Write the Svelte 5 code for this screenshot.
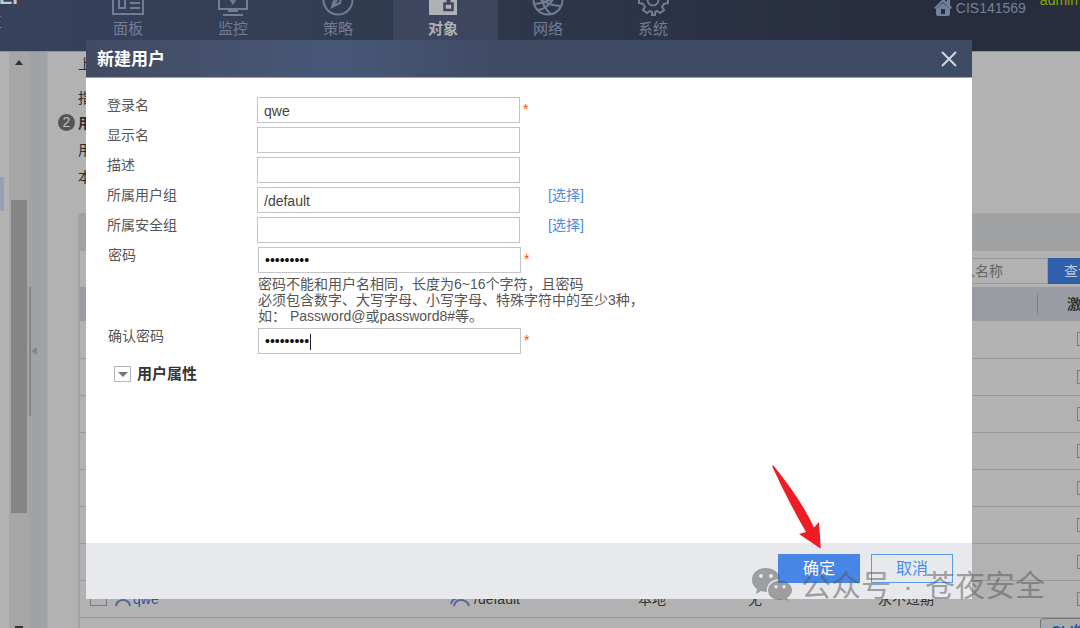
<script>
  const tabs = [
    { name: '面板', icon: 'panel' },
    { name: '监控', icon: 'monitor' },
    { name: '策略', icon: 'policy' },
    { name: '对象', icon: 'object', active: true },
    { name: '网络', icon: 'network' },
    { name: '系统', icon: 'system' }
  ];
  const emptyRows = [1, 2, 3, 4, 5, 6, 7];
  let form = $state({ login: 'qwe', display: '', desc: '', group: '/default', security: '', pwd: 'Abcdef12#', confirm: 'Abcdef12#' });
</script>

<div class="app">
  <header class="top">
    <div class="brand"><b>EF</b><span>正</span></div>
    <nav>
      {#each tabs as t}
        <a href="#{t.icon}" class:active={t.active}>
          <svg width="34" height="16" viewBox="0 0 34 16" fill="none" stroke="currentColor" stroke-width="2">
            {#if t.icon === 'panel'}
              <path d="M2-8V14H32V-8M8-4V8H14V-4M19 3H29M19 8H29" />
            {:else if t.icon === 'monitor'}
              <path d="M3-8V9H31V-8M17 9V12M12 11H22M7 15H27" />
              <path d="M8-1H12M22-1H27" /><path d="M13-1H21L17 5Z" fill="currentColor" stroke="none" />
            {:else if t.icon === 'policy'}
              <circle cx="17" cy="0" r="14.5" />
              <path d="M11 7L14-3L22-9L19 3ZM11 7L16 0" />
            {:else if t.icon === 'object'}
              <path d="M3-8H31V15H3Z" fill="currentColor" stroke="none" />
              <path d="M18.500 3.500H26.500V10H18.500Z" stroke="#3d465e" stroke-width="2.500" />
              <path d="M22.500 3V-1" stroke="#3d465e" stroke-width="4" />
            {:else if t.icon === 'network'}
              <circle cx="17" cy="0" r="14.5" />
              <path d="M4-5Q14 5 29 6M7 10Q20 8 26-9M10-4Q12 8 20 14M3 4Q16 3 30-6" />
            {:else}
              <circle cx="17" cy="0" r="5.500" />
              <path d="M3-3V3L7 4L9 7L7 10L11 13L14 11L16 12V15H19V12L21 11L24 13L28 10L26 7L28 4L32 3V-3" />
            {/if}
          </svg>
          <span>{t.name}</span>
        </a>
      {/each}
    </nav>
    <div class="account">
      <svg width="20" height="16" viewBox="0 0 20 16"><path d="M1 8L10-1L14 2V-2H17V5L19 8L17 9L10 2L3 9Z" fill="#74819a" /><path d="M3 9L10 3L17 9V14Q17 16 15 16H5Q3 16 3 14ZM8 9V14H12V9Z" fill="#74819a" fill-rule="evenodd" /></svg>
      <span class="host">CIS141569</span>
      <span class="who">admin</span>
    </div>
  </header>

  <div class="main">
    <aside><i class="picked"></i></aside>
    <div class="scroll"><i class="up"></i><i class="thumb"></i><i class="down"></i></div>
    <div class="split"><i class="bar"></i><i class="fold"></i></div>
    <section class="content">
      <div class="notes">
        <p>上</p>
        <p>指</p>
        <p class="step"><em>2</em><b>用</b></p>
        <p>用</p>
        <p>本</p>
      </div>
      <div class="list">
        <div class="tools"></div>
        <div class="search">
          <input type="text" aria-label="名称" placeholder="入名称" />
          <button type="button">查询</button>
        </div>
        <table>
          <colgroup><col /><col class="c2" /><col class="c3" /><col class="c4" /><col class="c5" /><col class="c6" /></colgroup>
          <thead><tr><th></th><th></th><th></th><th></th><th></th><th class="act">激活</th></tr></thead>
          <tbody>
            {#each emptyRows as r}
              <tr><td></td><td></td><td></td><td></td><td></td><td class="tick"><i class="box"></i></td></tr>
            {/each}
            <tr>
              <td class="first">
                <span class="cell"><i class="box wide"></i>
                <svg width="16" height="16" viewBox="0 0 16 16" fill="none" stroke="#52699b" stroke-width="2"><circle cx="8" cy="4" r="3.500" /><path d="M1 15Q2 9 8 9Q14 9 15 15" /></svg>
                <a href="#qwe">qwe</a></span>
              </td>
              <td>
                <span class="cell"><svg width="20" height="16" viewBox="0 0 20 16" fill="none" stroke="#52699b" stroke-width="2"><circle cx="11" cy="4" r="3.500" /><path d="M4 15Q5 9 11 9Q17 9 19 15M1 13Q2 8 7 7" /></svg>
                /default</span>
              </td>
              <td>本地</td><td>无</td><td>永不过期</td><td class="tick"><i class="box"></i></td>
            </tr>
          </tbody>
        </table>
      </div>
    </section>
  </div>
  <button type="button" class="cli">CLI控制台</button>

  <div class="dialog" role="dialog" aria-labelledby="title">
    <div class="head">
      <h2 id="title">新建用户</h2>
      <button type="button" class="close" aria-label="×"><svg width="16" height="16" viewBox="0 0 16 16"><path d="M1 1L15 15M15 1L1 15" stroke="#d3d7df" stroke-width="2" /></svg></button>
    </div>
    <form>
      <div class="row"><label for="login">登录名</label><input id="login" type="text" bind:value={form.login} /><span class="req">*</span></div>
      <div class="row"><label for="display">显示名</label><input id="display" type="text" bind:value={form.display} /></div>
      <div class="row"><label for="desc">描述</label><input id="desc" type="text" bind:value={form.desc} /></div>
      <div class="row"><label for="group">所属用户组</label><input id="group" type="text" bind:value={form.group} /><a class="pick" href="#group">[选择]</a></div>
      <div class="row"><label for="security">所属安全组</label><input id="security" type="text" bind:value={form.security} /><a class="pick" href="#security">[选择]</a></div>
      <div class="secret">
        <div class="row"><label for="pwd">密码</label><input id="pwd" type="password" bind:value={form.pwd} /><span class="req">*</span></div>
        <p class="hint">密码不能和用户名相同，长度为6~16个字符，且密码<br />必须包含数字、大写字母、小写字母、特殊字符中的至少3种，<br />如： Password@或password8#等。</p>
        <div class="row"><label for="confirm">确认密码</label><span class="field"><input id="confirm" type="password" bind:value={form.confirm} /><i class="caret"></i></span><span class="req">*</span></div>
      </div>
      <button type="button" class="more"><i></i>用户属性</button>
    </form>
    <footer>
      <button type="button" class="ok">确定</button>
      <button type="button" class="cancel">取消</button>
    </footer>
  </div>

  <svg class="arrow" width="51" height="86" viewBox="0 0 51 86"><path d="M2.500 1.500Q1 1 1.500 3Q16 35 35 68L28 70L49.800 84.800L48 58L43 63.500Q31 37 2.500 1.500Z" fill="#ee1c25" /></svg>

  <div class="mark">
    <svg width="42" height="36" viewBox="0 0 42 36">
      <path fill-rule="evenodd" d="M15 1C7 1 1 6 1 13C1 17 3 20 6 22L5 27L10 24Q13 25 16 25C15 18 20 12 29 12C28 5 22 1 15 1ZM10 7A2 2 0 1 1 10 11A2 2 0 1 1 10 7ZM20 7A2 2 0 1 1 20 11A2 2 0 1 1 20 7Z" />
      <path fill-rule="evenodd" d="M29 13.500C22 13.500 17 18 17 23.500C17 29 22 33 29 33Q31 33 33 32L37 34L36 31C39 29 41 26 41 23.500C41 18 36 13.500 29 13.500ZM25 18A1.700 1.700 0 1 1 25 21.400A1.700 1.700 0 1 1 25 18ZM33 18A1.700 1.700 0 1 1 33 21.400A1.700 1.700 0 1 1 33 18Z" />
    </svg>
    <span>公众号<span class="dot">·</span>苍夜安全</span>
  </div>
</div>

<style>
  :global(body) { margin: 0; font: 14px/20px "Liberation Sans", "Noto Sans CJK SC", sans-serif; }
  * { box-sizing: border-box; }
  button, input { font: inherit; margin: 0; border-radius: 0; }
  button { cursor: pointer; padding: 0; }
  a { text-decoration: none; }
  i, em { font-style: normal; }
  p { margin: 0; }
  .app { position: relative; height: 100vh; overflow: hidden; display: flex; flex-direction: column; background: #b2b2b2; color: #333; }

  .top { flex: none; height: 52px; display: flex; overflow: hidden; background: linear-gradient(90deg, #37415c 0, #343e55 25%, #2f394c 40%, #2b3245 65%, #272d3c 85%); border-bottom: 1px solid #8f929a; }
  .brand { width: 78px; flex: none; display: flex; flex-direction: column; color: #c5c8cd; }
  .brand b { font-size: 20px; line-height: 20px; margin-top: -13px; margin-left: -1px; }
  .brand span { color: #4398b5; line-height: 30px; margin-left: -12px; }
  nav { display: flex; flex: 1; }
  nav a { width: 105px; padding-right: 5px; height: 51px; display: flex; flex-direction: column; align-items: center; color: #717d94; }
  nav a span { font-size: 15px; line-height: 26px; }
  nav a.active { background: #3d465e; color: #b0b1b4; font-weight: bold; }
  nav svg { flex: none; }
  .account { display: flex; color: #74819a; }
  .account svg { margin-right: 3px; }
  .host { line-height: 16px; margin-right: 14px; }
  .who { color: #84a900; margin-top: -10px; margin-right: 2px; }

  .main { flex: 1; min-height: 0; display: flex; }
  aside { width: 9px; padding-top: 125px; }
  .picked { display: block; width: 4px; height: 34px; background: #95a2b5; }
  .scroll { width: 20px; background: #a6a6a6; display: flex; flex-direction: column; align-items: center; }
  .up { margin-top: 8px; border: 4px solid transparent; border-top: 0; border-bottom: 5px solid #333; }
  .thumb { width: 16px; height: 313px; margin-top: 135px; background: #858585; }
  .down { width: 8px; height: 2px; margin-top: auto; background: #333; }
  .split { width: 19px; background: #a0a3a5; display: flex; padding-top: 235px; border-right: 1px solid #a8a9aa; }
  .bar { width: 2px; height: 129px; background: #858585; }
  .fold { height: 8px; margin-top: 60px; border: 4px solid transparent; border-left: 0; border-right: 6px solid #858789; }
  .content { flex: 1; min-width: 0; padding-left: 30px; display: flex; flex-direction: column; }
  .notes { height: 161px; color: #2b2b2b; }
  .notes p { height: 27px; line-height: 28px; }
  .notes p:first-child { height: 32px; line-height: 24px; }
  .notes p:nth-child(2) { height: 25px; }
  .notes .step { display: flex; align-items: center; margin-left: -20px; }
  .step em { width: 17px; height: 17px; margin-right: 3px; border-radius: 50%; background: #555; color: #c0c0c0; line-height: 17px; text-align: center; }
  .list { border: 2px solid #a3a3a3; border-width: 1px 0 0 2px; flex: 1; }
  .tools { height: 37px; background: #a0a2a4; }
  .search { height: 36px; padding-top: 7px; display: flex; justify-content: flex-end; overflow: hidden; }
  .search input { width: 150px; height: 26px; border: 1px solid #999; background: transparent; padding: 0 0 0 62px; color: #555; }
  .search input::placeholder { color: #666; }
  .search button { width: 32px; height: 26px; padding-left: 16px; border: 0; background: #315fab; color: #bcc7da; text-align: left; white-space: nowrap; overflow: hidden; }
  table { width: 100%; table-layout: fixed; border-collapse: collapse; }
  .c2 { width: 188px; } .c3 { width: 110px; } .c4 { width: 130px; } .c5 { width: 159px; } .c6 { width: 43px; }
  th { height: 34px; padding: 0; background: #9a9ca3; text-align: left; }
  .act { padding-left: 30px; white-space: nowrap; overflow: hidden; background: linear-gradient(#808287, #808287) 0 7px / 1px 20px no-repeat #9a9ca3; }
  td { height: 37px; padding: 0; border-bottom: 1px solid #999; overflow: hidden; white-space: nowrap; }
  .cell { display: flex; align-items: center; gap: 4px; }
  .first { padding-left: 10px; }
  .cell a { color: #24569c; margin-left: -2px; }
  .box { display: block; width: 14px; height: 14px; border: 1px solid #7c7c7c; }
  .wide { width: 17px; height: 15px; margin-right: 4px; }
  .tick { padding: 11px 0 0 40px; vertical-align: top; }
  .cli { position: absolute; right: -34px; bottom: -15px; width: 74px; height: 25px; border: 1px solid #777; border-radius: 3px; background: #a9aaab; color: #2a5ba6; font-weight: bold; text-align: left; padding-left: 10px; white-space: nowrap; }

  .dialog { position: absolute; inset: 40px 108px 29px 86px; display: flex; flex-direction: column; background: #fff; }
  .head { flex: none; height: 38px; padding: 0 15px 0 11px; display: flex; align-items: center; justify-content: space-between; background: linear-gradient(90deg, #414a62 0, #485777 27%, #475675 31%, #3f4a64 47%, #3f4a64 100%); border-bottom: 1px solid #9ca1ae; }
  h2 { margin: 0; padding-top: 3px; font-size: 17px; line-height: 24px; color: #fff; }
  .close { border: 0; background: none; display: flex; }
  form { flex: 1; padding: 19px 21px; color: #555; }
  .row { display: flex; align-items: flex-start; height: 30px; }
  .row label { width: 150px; line-height: 16px; }
  form input { width: 263px; height: 26px; border: 1px solid #c4c4c8; background: #fff; padding: 2px 6px 0; color: #444; outline: 0; }
  form input[type="password"] { color: #111; padding-top: 0; }
  .req { margin-left: 3px; color: #ff4b00; line-height: 24px; }
  .pick { margin-left: 28px; line-height: 16px; color: #4a8be8; }
  .secret { padding-left: 1px; }
  .hint { margin: -1px 0 4px 150px; line-height: 16px; }
  .field { position: relative; display: flex; }
  .caret { position: absolute; left: 52px; top: 6px; width: 1px; height: 16px; background: #222; }
  .more { display: flex; align-items: center; gap: 6px; margin: 6px 0 0 7px; border: 0; background: none; color: #333; font-size: 15px; font-weight: bold; }
  .more i { width: 17px; height: 16px; border: 1px solid #b5b5bb; display: grid; place-items: center; }
  .more i::after { content: ""; border: 5px solid transparent; border-bottom: 0; border-top: 5px solid #777; }
  footer { flex: none; height: 56px; padding: 11px 19px; display: flex; justify-content: flex-end; gap: 11px; background: #e8e9ed; }
  footer button { width: 82px; height: 29px; font-size: 16px; }
  .ok { border: 0; background: #4786e6; color: #fff; }
  .cancel { border: 1px solid #5c9bea; background: transparent; color: #4a8be8; }

  .arrow { position: absolute; right: 258px; bottom: 78px; }
  .mark { position: absolute; right: 35px; bottom: 22px; display: flex; align-items: center; gap: 8px; opacity: 0.5; color: #555; font-family: "Noto Sans CJK SC", sans-serif; font-size: 30px; line-height: 40px; white-space: pre; pointer-events: none; }
  .mark svg { fill: #555; }
  .dot { padding: 0 12px; font-family: "Liberation Sans", sans-serif; }
</style>
